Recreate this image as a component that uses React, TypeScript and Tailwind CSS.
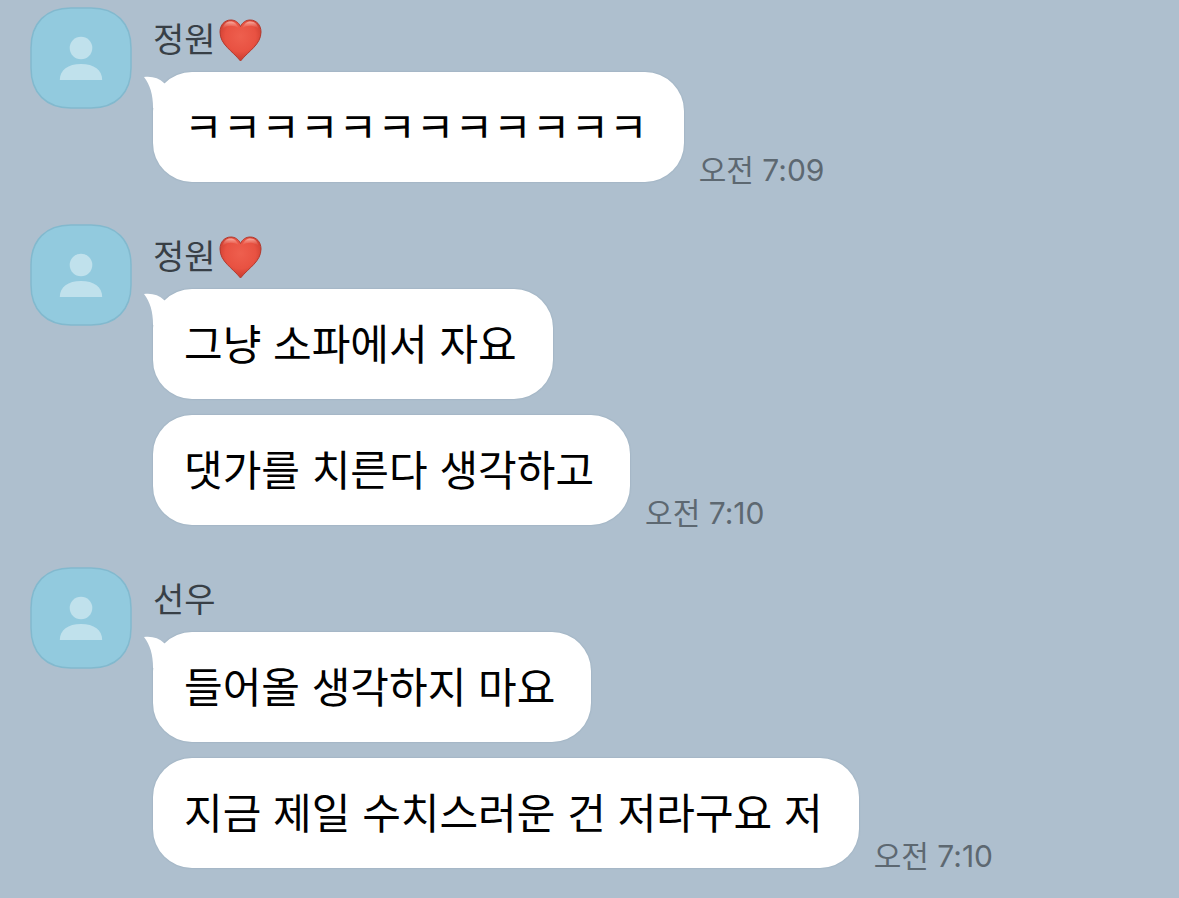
import { useId } from 'react';

interface MessageGroup {
    name: string;
    heart?: boolean;
    messages: string[];
    time: string;
}

const groups: MessageGroup[] = [
    { name: '정원', heart: true, messages: ['ㅋㅋㅋㅋㅋㅋㅋㅋㅋㅋㅋㅋ'], time: '오전 7:09' },
    { name: '정원', heart: true, messages: ['그냥 소파에서 자요', '댓가를 치른다 생각하고'], time: '오전 7:10' },
    { name: '선우', messages: ['들어올 생각하지 마요', '지금 제일 수치스러운 건 저라구요 저'], time: '오전 7:10' },
];

function ProfileAvatar() {
    return (
        <svg viewBox="0 0 102 102" className="h-[102px] w-[102px] shrink-0" aria-hidden="true">
            <path
                d="M41 1H61C86 1 101 16 101 41V61C101 86 86 101 61 101H41C16 101 1 86 1 61V41C1 16 16 1 41 1Z"
                fill="#92cade"
                stroke="#82b9ce"
                strokeWidth="1.5"
            />
            <circle cx="51" cy="41" r="11.3" fill="#c0e1ec" />
            <path d="M29.800 73C29.800 63 38 57 51 57C64 57 72.200 63 72.200 73Z" fill="#c0e1ec" />
        </svg>
    );
}

function HeartIcon() {
    const id = useId();

    return (
        <svg viewBox="0 0 43 43" className="h-[43px] w-[43px]" role="img" aria-label="하트">
            <defs>
                <radialGradient id={`${id}-fill`} cx="0.5" cy="0.4" r="0.62">
                    <stop offset="0" stopColor="#ee5f4e" />
                    <stop offset="0.6" stopColor="#e85242" />
                    <stop offset="1" stopColor="#c5382b" />
                </radialGradient>
                <linearGradient id={`${id}-shine`} x1="0" y1="0" x2="0" y2="1">
                    <stop offset="0" stopColor="#ffd0c6" stopOpacity="0.75" />
                    <stop offset="1" stopColor="#f47b6a" stopOpacity="0" />
                </linearGradient>
            </defs>
            <path
                d="M21.500 7.500C19.500 3.200 16 1 11.800 1C5.500 1 1 6 1 13C1 25.500 13 31.500 21.500 42C30 31.500 42 25.500 42 13C42 6 37.500 1 31.200 1C27 1 23.500 3.200 21.500 7.500Z"
                fill={`url(#${id}-fill)`}
                stroke="#b23a2f"
                strokeWidth="1"
                strokeLinejoin="round"
            />
            <path d="M3.500 10C4.500 5 7.500 2.500 11.500 2.500C15.500 2.500 18 5 19.500 9C14 5.500 8 6 3.500 10Z" fill={`url(#${id}-shine)`} />
            <path d="M39.500 10C38.500 5 35.500 2.500 31.500 2.500C27.500 2.500 25 5 23.500 9C29 5.500 35 6 39.500 10Z" fill={`url(#${id}-shine)`} />
        </svg>
    );
}

function Bubble({ text, tail }: { text: string; tail: boolean }) {
    return (
        <div className="relative rounded-[39px] bg-white pt-[26px] pr-9 pb-6 pl-[31px] shadow-[0_0_1px_1px_rgba(90,115,140,0.1)]">
            {tail && (
                <svg viewBox="0 0 24 32" className="absolute top-1 -left-[10px] h-8 w-6" aria-hidden="true">
                    <path d="M1 1C9 0 16 2 21 7L24 10V32H10C10 18 7 9 1 1Z" fill="#fff" />
                </svg>
            )}
            <p className="text-[42px] leading-[60px] text-black">{text}</p>
        </div>
    );
}

function ChatGroup({ group }: { group: MessageGroup }) {
    const last = group.messages.length - 1;

    return (
        <li className="flex items-start gap-[21px]">
            <ProfileAvatar />
            <div className="min-w-0">
                <div className="flex h-[65px] items-start gap-[3px] pt-3">
                    <span className="text-[34px] leading-[42px] text-[#383f46]">{group.name}</span>
                    {group.heart && <HeartIcon />}
                </div>
                <div className="flex flex-col gap-4">
                    {group.messages.map((message, i) => (
                        <div key={message} className="flex items-end gap-[15px]">
                            <Bubble text={message} tail={i === 0} />
                            {i === last && (
                                <time className="shrink-0 text-[30px] leading-6 text-[#5d6871]">{group.time}</time>
                            )}
                        </div>
                    ))}
                </div>
            </div>
        </li>
    );
}

export default function App() {
    return (
        <main className="min-h-screen bg-[#aebfce] px-[30px] pt-[7px] pb-[30px] font-['Inter','Noto_Sans_CJK_KR',sans-serif]">
            <ul className="flex flex-col gap-[42px]">
                {groups.map((group, i) => (
                    <ChatGroup key={i} group={group} />
                ))}
            </ul>
        </main>
    );
}
